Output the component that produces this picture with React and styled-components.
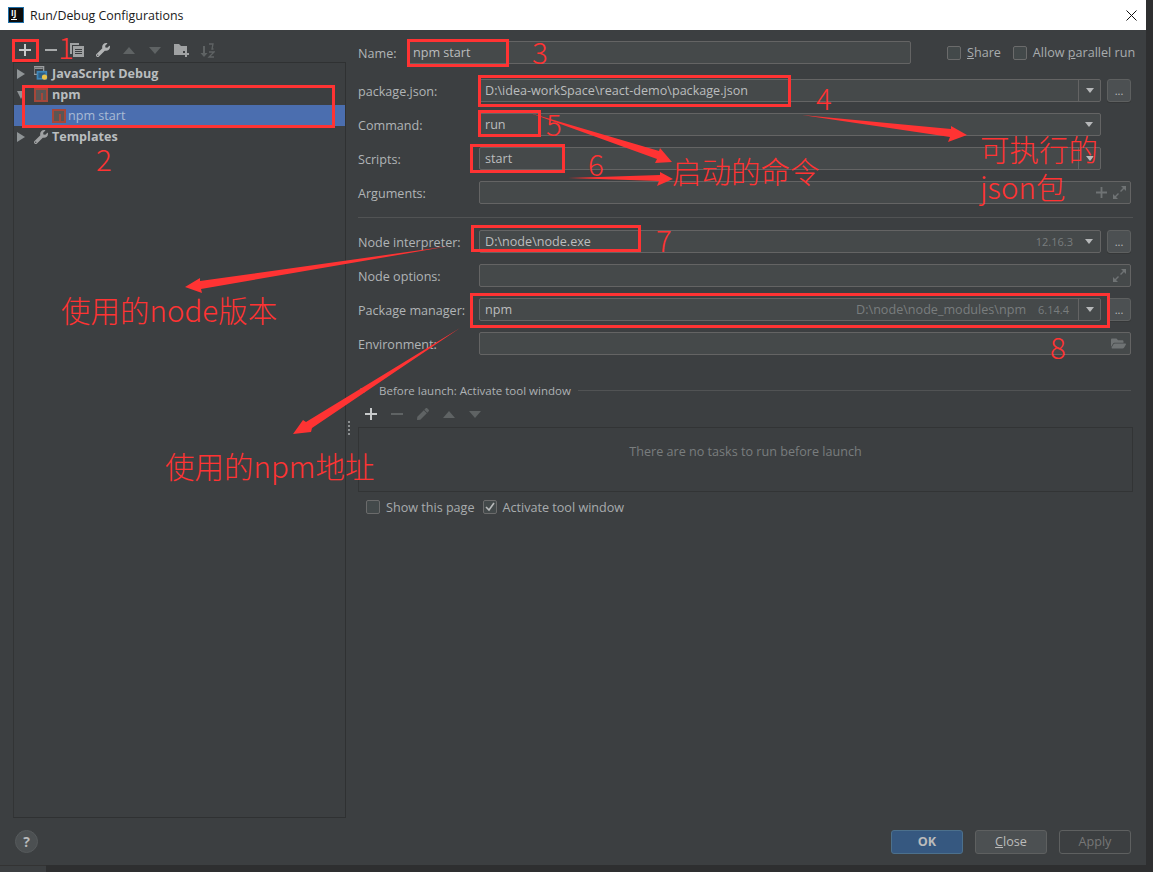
import React from 'react';
import styled, { createGlobalStyle } from 'styled-components';
import { FaWrench, FaPen, FaFolderOpen } from 'react-icons/fa';

const GlobalStyle = createGlobalStyle`
	html, body {
		margin: 0;
		padding: 0;
		background: #2d2d2d;
	}
	* {
		box-sizing: border-box;
	}
`;

const Page = styled.div`
	position: relative;
	width: 1153px;
	height: 872px;
	overflow: hidden;
	background: #2e2f30;
	font-family: 'Open Sans', 'Noto Sans', sans-serif;
	font-size: 12.6px;
	color: #b4b8ba;
`;

const Dialog = styled.div`
	width: 1146px;
	height: 865px;
	display: flex;
	flex-direction: column;
	background: #3c3f41;
`;

const TitleBar = styled.div`
	height: 30px;
	flex: none;
	display: flex;
	align-items: center;
	gap: 6px;
	padding: 0 9px 0 8px;
	background: #fff;
	color: #1a1a1a;
	font-size: 12.4px;
`;

const AppIcon = styled.div`
	width: 16px;
	height: 16px;
	background: #0c0c0c;
	border: 1px solid #1e6fa8;
	color: #fff;
	font-size: 8px;
	font-weight: 700;
	line-height: 9px;
	padding-left: 2px;
	&::after {
		content: '';
		display: block;
		width: 6px;
		height: 1px;
		margin-top: 2px;
		background: #fff;
	}
`;

const TitleText = styled.div`
	flex: 1;
`;

const Content = styled.div`
	height: 788px;
	flex: none;
	display: flex;
`;

const LeftColumn = styled.div`
	width: 346px;
	flex: none;
	display: flex;
	flex-direction: column;
	padding-left: 13px;
`;

const IconBar = styled.div`
	display: flex;
	align-items: center;
	height: ${(p) => p.$height}px;
	flex: none;
	padding-top: ${(p) => p.$top}px;
	margin-left: ${(p) => p.$shift ?? 0}px;
`;

const IconSlot = styled.div`
	width: 26px;
	height: 20px;
	display: flex;
	align-items: center;
	justify-content: center;
	color: ${(p) => (p.$dim ? '#5f6364' : '#b2b4b5')};
`;

const TreeBox = styled.div`
	flex: 1;
	border: 1px solid #2f3132;
	border-left-color: #323435;
`;

const TreeRow = styled.div`
	height: 21px;
	display: flex;
	align-items: center;
	gap: ${(p) => p.$gap ?? 4}px;
	padding-left: ${(p) => p.$indent}px;
	background: ${(p) => (p.$selected ? '#4b6eaf' : 'transparent')};
	color: ${(p) => (p.$selected ? '#a9bbd4' : '#b9bdbf')};
	font-weight: ${(p) => (p.$bold ? 700 : 400)};
`;

const TreeArrow = styled.div`
	width: 0;
	height: 0;
	margin-right: 5px;
	${(p) =>
		p.$open
			? `border-left: 4px solid transparent; border-right: 4px solid transparent; border-top: 8px solid #8f9496;`
			: `border-top: 5px solid transparent; border-bottom: 5px solid transparent; border-left: 8px solid #8f9496;`}
`;

const RightColumn = styled.div`
	position: relative;
	flex: 1;
	min-width: 0;
	display: flex;
	flex-direction: column;
	padding: 11px 13px 0 12px;
`;

const Grip = styled.div`
	position: absolute;
	left: 2px;
	top: 391px;
	width: 1px;
	height: 14px;
	border-left: 2px dotted #8c8f90;
`;

const Row = styled.div`
	display: flex;
	align-items: center;
	height: 23px;
	flex: none;
	padding-right: 2px;
	margin-bottom: ${(p) => p.$gap ?? 11}px;
`;

const Label = styled.div`
	width: ${(p) => p.$width ?? 121}px;
	flex: none;
	padding-top: 1px;
	white-space: nowrap;
	color: #b0b4b6;
`;

const Field = styled.div`
	flex: ${(p) => (p.$width ? 'none' : 1)};
	width: ${(p) => (p.$width ? `${p.$width}px` : 'auto')};
	height: 23px;
	display: flex;
	align-items: center;
	padding-left: 5px;
	background: #45494a;
	border: 1px solid #646464;
	border-radius: 2px;
	color: #bbbdbe;
	white-space: nowrap;
`;

const Hint = styled.span`
	color: #797d7e;
	font-size: ${(p) => (p.$small ? '11px' : 'inherit')};
	margin-left: ${(p) => p.$ml ?? 12}px;
	margin-right: ${(p) => p.$mr ?? 0}px;
`;

const Spacer = styled.div`
	flex: 1;
`;

const ComboArrow = styled.div`
	width: 22px;
	height: 21px;
	flex: none;
	display: flex;
	align-items: center;
	justify-content: center;
	border-left: ${(p) => (p.$plain ? 'none' : '1px solid #646464')};
	&::after {
		content: '';
		border-left: 4px solid transparent;
		border-right: 4px solid transparent;
		border-top: 5px solid #b6b8b9;
	}
`;

const BrowseButton = styled.div`
	width: 24px;
	height: 23px;
	flex: none;
	margin-left: 6px;
	background: #4c5052;
	border: 1px solid #5e6060;
	border-radius: 3px;
	box-shadow: 0 1px 0 #353738;
	color: #bbb;
	font-size: 11px;
	line-height: 22px;
	text-align: center;
`;

const FieldIcons = styled.div`
	display: flex;
	align-items: center;
	gap: 6px;
	padding-right: 4px;
	color: #6f7374;
`;

const CheckWrap = styled.label`
	display: flex;
	align-items: center;
	gap: 6px;
	margin-left: ${(p) => p.$ml ?? 0}px;
	white-space: nowrap;
	color: #a8acae;
`;

const CheckBox = styled.div`
	width: 14px;
	height: 14px;
	flex: none;
	display: flex;
	align-items: center;
	justify-content: center;
	background: #43494a;
	border: 1px solid #6b6b6b;
	border-radius: 2px;
`;

const Underlined = styled.span`
	text-decoration: underline;
`;

const Separator = styled.div`
	height: 1px;
	flex: none;
	margin: ${(p) => p.$margin ?? '0'};
	background: #515354;
	flex-grow: ${(p) => (p.$grow ? 1 : 0)};
`;

const BeforeHeader = styled.div`
	display: flex;
	align-items: center;
	height: 16px;
	flex: none;
	margin-top: 27px;
	padding-right: 2px;
	color: #aeb2b4;
	font-size: 11.5px;
	gap: 7px;
`;

const SmallArrow = styled.div`
	width: 0;
	height: 0;
	margin: 0 4px 0 2px;
	border-left: 4px solid transparent;
	border-right: 4px solid transparent;
	border-top: 5px solid #707475;
`;

const TaskBox = styled.div`
	height: 65px;
	flex: none;
	display: flex;
	align-items: center;
	justify-content: center;
	padding-bottom: 16px;
	border: 1px solid #323435;
	color: #797d7e;
`;

const OptionsRow = styled.div`
	display: flex;
	align-items: center;
	height: 14px;
	flex: none;
	margin-top: 8px;
	padding-left: 8px;
	gap: 8px;
`;

const Footer = styled.div`
	flex: 1;
	display: flex;
	align-items: flex-start;
	gap: 12px;
	padding: 12px 15px 0 15px;
`;

const HelpButton = styled.div`
	width: 23px;
	height: 23px;
	border-radius: 50%;
	background: #4c5052;
	border: 1px solid #565a5c;
	color: #b8babb;
	font-size: 14px;
	font-weight: 700;
	line-height: 21px;
	text-align: center;
`;

const DialogButton = styled.div`
	width: 72px;
	height: 24px;
	border-radius: 3px;
	text-align: center;
	line-height: 22px;
	background: ${(p) => (p.$kind === 'ok' ? '#365880' : p.$kind === 'off' ? 'transparent' : '#4c5052')};
	border: 1px solid ${(p) => (p.$kind === 'ok' ? '#4c708c' : '#5e6060')};
	color: ${(p) => (p.$kind === 'off' ? '#777' : '#bbb')};
	font-weight: ${(p) => (p.$kind === 'ok' ? 700 : 400)};
`;

const BottomStrip = styled.div`
	height: 7px;
	width: 46px;
	background: #3c3f41;
	border-top: 1px solid #333;
`;

// the red marks somebody painted on top of the dialog
const RedBox = styled.div`
	position: absolute;
	left: ${(p) => p.$x}px;
	top: ${(p) => p.$y}px;
	width: ${(p) => p.$w}px;
	height: ${(p) => p.$h}px;
	border: 3px solid #ff3333;
`;

const Note = styled.div`
	position: absolute;
	left: ${(p) => p.$x}px;
	top: ${(p) => p.$y}px;
	color: #ff3333;
	font-family: 'Noto Sans CJK SC', 'Noto Sans', sans-serif;
	font-size: 29.5px;
	font-weight: 300;
	line-height: 28px;
	white-space: nowrap;
`;

const ArrowLayer = styled.svg`
	position: absolute;
	left: 0;
	top: 0;
	width: 1153px;
	height: 872px;
	pointer-events: none;
`;

const Plus = ({ size = 12, color = '#c8cacb' }) => (
	<svg width={size} height={size} viewBox="0 0 12 12">
		<path d="M5 0h2v5h5v2H7v5H5V7H0V5h5z" fill={color} />
	</svg>
);

const Minus = ({ color = '#a8aaab' }) => (
	<svg width="12" height="12" viewBox="0 0 12 12">
		<path d="M0 5h12v2H0z" fill={color} />
	</svg>
);

const CopyIcon = () => (
	<svg width="14" height="14" viewBox="0 0 14 14">
		<path d="M0 0h9v2H2v9H0z" fill="#a0a2a3" />
		<path d="M3 3h11v11H3z" fill="#a0a2a3" />
		<path d="M5 6h7v1H5zM5 8h7v1H5zM5 10h7v1H5z" fill="#3c3f41" />
	</svg>
);

const Tri = ({ up, color = '#5f6364' }) => (
	<svg width="12" height="7" viewBox="0 0 12 7">
		<path d={up ? 'M6 0l6 7H0z' : 'M0 0h12L6 7z'} fill={color} />
	</svg>
);

const FolderPlus = () => (
	<svg width="15" height="14" viewBox="0 0 15 14">
		<path d="M0 1h5l2 2h6v5H9v4H0z" fill="#a0a2a3" />
		<path d="M11 8h2v2h2v2h-2v2h-2v-2H9v-2h2z" fill="#a0a2a3" />
	</svg>
);

const SortIcon = () => (
	<svg width="15" height="15" viewBox="0 0 15 15">
		<path d="M3 3h2v7h2.500L4 14 .5 10H3z" fill="#5f6364" />
		<path d="M9 1h4l-1 5h1.500M9 9h5l-5 5h5" fill="none" stroke="#5f6364" strokeWidth="1.300" />
	</svg>
);

const JsDebugIcon = () => (
	<svg width="14" height="15" viewBox="0 0 16 16">
		<path d="M0 0h11v9H0z" fill="none" stroke="#9a9d9f" strokeWidth="1.500" />
		<path d="M1 2h9" stroke="#9a9d9f" strokeWidth="1.500" />
		<path d="M3 5h12v10H3z" fill="#3f86b8" />
		<path d="M5 7h8v6H5z" fill="#2e5f85" />
		<circle cx="12" cy="12" r="3" fill="#e8c34a" />
	</svg>
);

const NpmIcon = () => (
	<svg width="14" height="14" viewBox="0 0 14 14">
		<path d="M0 0h14v14H0z" fill="#a5473a" />
		<path d="M2 2h10v10H9V5H7v7H2z" fill="#5a5654" />
	</svg>
);

const ExpandIcon = () => (
	<svg width="13" height="13" viewBox="0 0 13 13">
		<path d="M8 0h5v5l-2-2-3 3-1-1 3-3zM0 8l2 2 3-3 1 1-3 3 2 2H0z" fill="#6f7374" />
	</svg>
);

const CheckMark = () => (
	<svg width="10" height="10" viewBox="0 0 10 10">
		<path d="M1 5l3 3 5-7" fill="none" stroke="#b8babb" strokeWidth="1.600" />
	</svg>
);

const CloseGlyph = () => (
	<svg width="11" height="11" viewBox="0 0 11 11">
		<path d="M.5.5l10 10M10.500.5l-10 10" stroke="#111" strokeWidth="1" />
	</svg>
);

const redBoxes = [
	{ x: 12, y: 39, w: 27, h: 23 },
	{ x: 22, y: 85, w: 313, h: 43 },
	{ x: 407, y: 39, w: 102, h: 28 },
	{ x: 478, y: 75, w: 313, h: 32 },
	{ x: 478, y: 110, w: 63, h: 27 },
	{ x: 470, y: 144, w: 95, h: 29 },
	{ x: 471, y: 225, w: 170, h: 27 },
	{ x: 470, y: 293, w: 640, h: 35 },
];

const notes = [
	{ text: '1', x: 58, y: 32 },
	{ text: '2', x: 96, y: 144 },
	{ text: '3', x: 532, y: 37 },
	{ text: '4', x: 816, y: 83 },
	{ text: '5', x: 546, y: 109 },
	{ text: '6', x: 588, y: 149 },
	{ text: '7', x: 656, y: 225 },
	{ text: '8', x: 1050, y: 332 },
	{ text: '启动的命令', x: 672, y: 156 },
	{ text: '可执行的', x: 980, y: 134 },
	{ text: 'json包', x: 980, y: 172 },
	{ text: '使用的node版本', x: 61, y: 295 },
	{ text: '使用的npm地址', x: 165, y: 451 },
];

const arrows = [
	'M530 113L659 151L660 148L672 162L655 163L657 159Z',
	'M568 178L660 175L660 172L673 179L657 186L659 181Z',
	'M802 115L951 129L951 126L967 135L948 142L950 137Z',
	'M450 246L200 281L200 278L185 287L202 293L201 289Z',
	'M460 328L306 422L303 420L293 434L311 432L312 428Z',
];

export default function App() {
	return (
		<Page>
			<GlobalStyle />
			<Dialog>
				<TitleBar>
					<AppIcon>IJ</AppIcon>
					<TitleText>Run/Debug Configurations</TitleText>
					<CloseGlyph />
				</TitleBar>
				<Content>
					<LeftColumn>
						<IconBar $height={32} $top={8} $shift={-1}>
							<IconSlot><Plus /></IconSlot>
							<IconSlot><Minus /></IconSlot>
							<IconSlot><CopyIcon /></IconSlot>
							<IconSlot><FaWrench size={14} /></IconSlot>
							<IconSlot><Tri up /></IconSlot>
							<IconSlot><Tri /></IconSlot>
							<IconSlot><FolderPlus /></IconSlot>
							<IconSlot><SortIcon /></IconSlot>
						</IconBar>
						<TreeBox>
							<TreeRow $indent={3} $bold>
								<TreeArrow />
								<JsDebugIcon />
								JavaScript Debug
							</TreeRow>
							<TreeRow $indent={3} $bold>
								<TreeArrow $open />
								<NpmIcon />
								npm
							</TreeRow>
							<TreeRow $indent={38} $gap={2} $selected>
								<NpmIcon />
								npm start
							</TreeRow>
							<TreeRow $indent={3} $bold>
								<TreeArrow />
								<FaWrench size={14} color="#a0a2a3" />
								Templates
							</TreeRow>
						</TreeBox>
					</LeftColumn>
					<RightColumn>
						<Grip />
						<Row $gap={15}>
							<Label $width={49}>Name:</Label>
							<Field $width={504}>npm start</Field>
							<CheckWrap $ml={36}>
								<CheckBox />
								<span><Underlined>S</Underlined>hare</span>
							</CheckWrap>
							<CheckWrap $ml={12}>
								<CheckBox />
								<span>Allow <Underlined>p</Underlined>arallel run</span>
							</CheckWrap>
						</Row>
						<Row>
							<Label>package.json:</Label>
							<Field>
								D:\idea-workSpace\react-demo\package.json
								<Spacer />
								<ComboArrow />
							</Field>
							<BrowseButton>...</BrowseButton>
						</Row>
						<Row>
							<Label>Command:</Label>
							<Field $width={622}>
								run
								<Spacer />
								<ComboArrow $plain />
							</Field>
						</Row>
						<Row>
							<Label>Scripts:</Label>
							<Field $width={622}>
								start
								<Spacer />
								<ComboArrow />
							</Field>
						</Row>
						<Row $gap={0}>
							<Label>Arguments:</Label>
							<Field>
								<Spacer />
								<FieldIcons>
									<Plus size={11} color="#6f7374" />
									<ExpandIcon />
								</FieldIcons>
							</Field>
						</Row>
						<Separator $margin="13px 0 12px 0" />
						<Row>
							<Label>Node interpreter:</Label>
							<Field $width={622}>
								D:\node\node.exe
								<Spacer />
								<Hint $small $mr={5}>12.16.3</Hint>
								<ComboArrow $plain />
							</Field>
							<BrowseButton>...</BrowseButton>
						</Row>
						<Row>
							<Label>Node options:</Label>
							<Field>
								<Spacer />
								<FieldIcons><ExpandIcon /></FieldIcons>
							</Field>
						</Row>
						<Row>
							<Label>Package manager:</Label>
							<Field $width={622}>
								npm
								<Spacer />
								<Hint>D:\node\node_modules\npm</Hint>
								<Hint $small $mr={9}>6.14.4</Hint>
								<ComboArrow />
							</Field>
							<BrowseButton>...</BrowseButton>
						</Row>
						<Row $gap={0}>
							<Label>Environment:</Label>
							<Field>
								<Spacer />
								<FieldIcons><FaFolderOpen size={15} /></FieldIcons>
							</Field>
						</Row>
						<BeforeHeader>
							<SmallArrow />
							<span>Before launch: Activate tool window</span>
							<Separator $grow />
						</BeforeHeader>
						<IconBar $height={29} $top={3}>
							<IconSlot><Plus /></IconSlot>
							<IconSlot $dim><Minus color="#5f6364" /></IconSlot>
							<IconSlot $dim><FaPen size={12} /></IconSlot>
							<IconSlot $dim><Tri up /></IconSlot>
							<IconSlot $dim><Tri /></IconSlot>
						</IconBar>
						<TaskBox>There are no tasks to run before launch</TaskBox>
						<OptionsRow>
							<CheckWrap>
								<CheckBox />
								<span>Show this page</span>
							</CheckWrap>
							<CheckWrap>
								<CheckBox><CheckMark /></CheckBox>
								<span>Activate tool window</span>
							</CheckWrap>
						</OptionsRow>
					</RightColumn>
				</Content>
				<Footer>
					<HelpButton>?</HelpButton>
					<Spacer />
					<DialogButton $kind="ok">OK</DialogButton>
					<DialogButton><Underlined>C</Underlined>lose</DialogButton>
					<DialogButton $kind="off">Apply</DialogButton>
				</Footer>
			</Dialog>
			<BottomStrip />
			<ArrowLayer viewBox="0 0 1153 872">
				{arrows.map((d) => (
					<path key={d} d={d} fill="#ff3333" />
				))}
			</ArrowLayer>
			{redBoxes.map((b) => (
				<RedBox key={`${b.x}-${b.y}`} $x={b.x} $y={b.y} $w={b.w} $h={b.h} />
			))}
			{notes.map((n) => (
				<Note key={n.text} $x={n.x} $y={n.y}>{n.text}</Note>
			))}
		</Page>
	);
}
